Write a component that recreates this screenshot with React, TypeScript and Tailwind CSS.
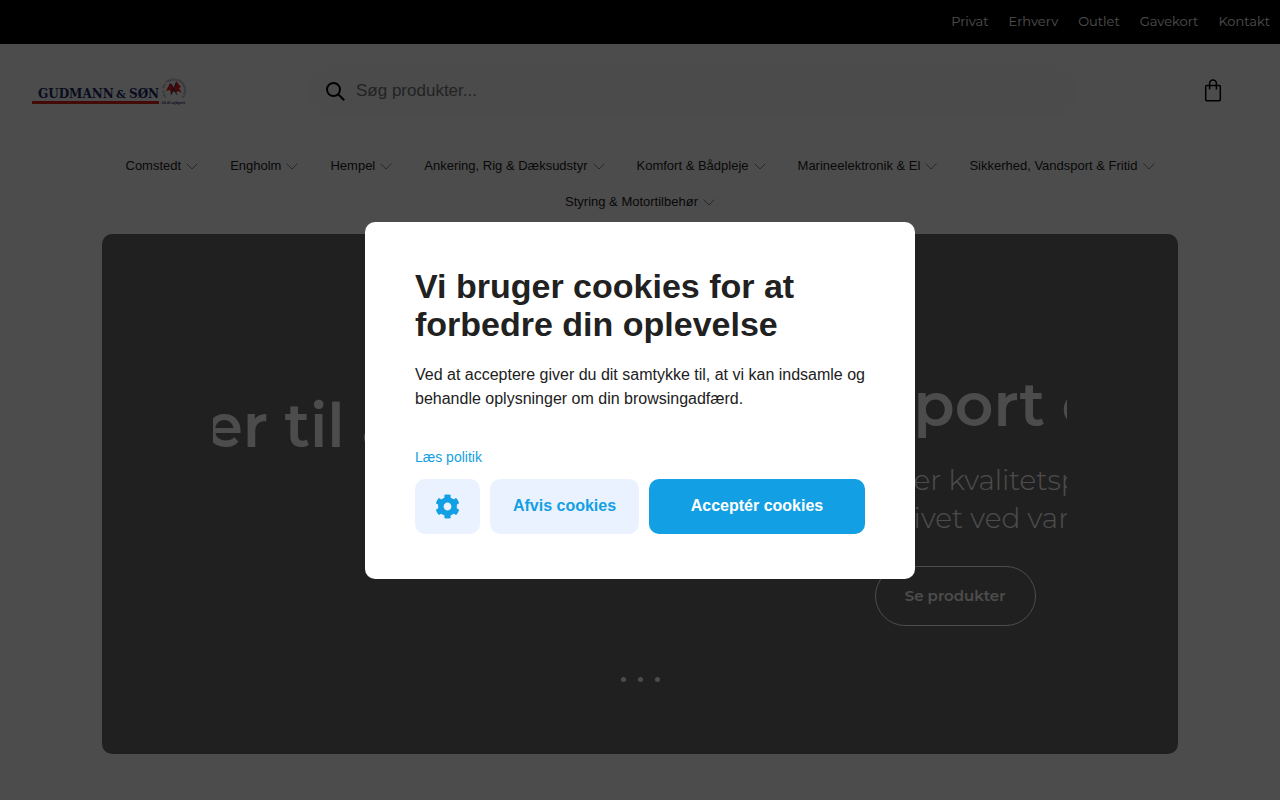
import { FaCog } from 'react-icons/fa';

const topLinks = ['Privat', 'Erhverv', 'Outlet', 'Gavekort', 'Kontakt'];

const categories = [
  'Comstedt',
  'Engholm',
  'Hempel',
  'Ankering, Rig & Dæksudstyr',
  'Komfort & Bådpleje',
  'Marineelektronik & El',
  'Sikkerhed, Vandsport & Fritid',
  'Styring & Motortilbehør',
];

function Logo() {
  return (
    <svg width="156" height="32" viewBox="0 0 156 32" role="img" aria-label="Gudmann & Søn">
      <text y="23" fontSize="12" fontWeight="700" fill="#1b2a6b" fontFamily="'DejaVu Serif', serif">
        <tspan x="6">GUDMANN</tspan>
        <tspan x="84" fontSize="11">&amp;</tspan>
        <tspan x="97">SØN</tspan>
      </text>
      <rect x="0" y="26" width="127" height="3" fill="#e2231a" />
      <path id="ring" d="M134.5 22 A10 10 0 1 1 149.5 22" fill="none" />
      <text fontSize="3" fill="#2d3558" fontFamily="'Liberation Sans', sans-serif">
        <textPath href="#ring">SEJL- OG PRESENNINGMAGER</textPath>
      </text>
      <path d="M134 16 L138 8 L141 11 L142 14 L144 6 L149 12 L147 13 L150 18 L146 16 L144 18 L142 16 L139 19 L138 15 Z" fill="#e2231a" />
      <path d="M139 9 L145 20 M144 8 L139 20" stroke="#1b2a6b" strokeWidth="0.8" />
      <text x="129" y="29" fontSize="4" fontStyle="italic" fontWeight="700" fill="#1b2a6b" fontFamily="'Liberation Serif', serif">
        Alt til sejlsport
      </text>
    </svg>
  );
}

function ChevronDown() {
  return (
    <svg width="12" height="7" viewBox="0 0 12 7" fill="none" stroke="#666" strokeWidth="0.8" aria-hidden="true">
      <path d="M0.5 0.6 L6 6 L11.5 0.6" />
    </svg>
  );
}

function Header() {
  return (
    <header>
      <nav aria-label="Genveje" className="flex h-11 items-center justify-end gap-5 bg-black px-2.5 font-['Montserrat','Inter',sans-serif] text-[13px] text-white">
        {topLinks.map((link) => (
          <a key={link} href="#">{link}</a>
        ))}
      </nav>
      <div className="flex items-center px-8 pt-5">
        <a href="#" className="w-[274px] shrink-0">
          <Logo />
        </a>
        <form role="search" className="flex h-[54px] flex-1 items-center gap-[11px] rounded-full bg-[#fafafa] px-5">
          <svg width="19" height="19" viewBox="0 0 19 19" fill="none" stroke="#000" strokeWidth="2" aria-hidden="true" className="shrink-0">
            <circle cx="7.5" cy="7.5" r="6.5" />
            <path d="M12.2 12.2 L18.2 18.2" />
          </svg>
          <input
            type="search"
            aria-label="Søg produkter"
            placeholder="Søg produkter..."
            className="w-full bg-transparent text-[17px] outline-none placeholder:text-[#757575]"
          />
        </form>
        <div className="flex w-[170px] shrink-0 justify-end pr-[26px]">
          <button type="button" aria-label="Kurv">
            <svg width="18" height="24" viewBox="0 0 18 24" fill="none" stroke="#000" strokeWidth="1.5" aria-hidden="true">
              <rect x="1.7" y="6.6" width="14.6" height="15.2" rx="1" />
              <path d="M5.6 10.6 V4.4 A3.4 3.4 0 0 1 12.4 4.4 V10.6" />
            </svg>
          </button>
        </div>
      </div>
      <nav aria-label="Kategorier" className="px-10 pt-[30px] pb-3.5">
        <ul className="flex flex-wrap justify-center gap-x-8">
          {categories.map((category) => (
            <li key={category}>
              <a href="#" className="flex h-9 items-center gap-[5px] text-[13px] text-[#212121]">
                {category}
                <ChevronDown />
              </a>
            </li>
          ))}
        </ul>
      </nav>
    </header>
  );
}

function Hero() {
  return (
    <section className="mx-[8%] flex h-[520px] flex-col rounded-[10px] bg-[#6b6b6b] px-[111px] pb-[72px] font-['Montserrat','Inter',sans-serif] text-white">
      <div className="flex flex-1 justify-between overflow-hidden whitespace-nowrap">
        <div className="pt-[152px]">
          <h2 className="-ml-2 text-[60px] leading-[80px] font-semibold">er til a</h2>
        </div>
        <div className="w-[192px] overflow-hidden pt-[131px]">
          <div className="pl-[39px]">
            <h2 className="text-[60px] leading-[80px] font-semibold">port o</h2>
            <p className="pt-4 text-[28px] leading-[38px] font-light">
              er kvalitetsp
              <br />
              ivet ved van
            </p>
          </div>
          <a href="#" className="mt-[29px] flex h-[60px] w-[161px] items-center justify-center rounded-full border border-white text-[15px] font-semibold">
            Se produkter
          </a>
        </div>
      </div>
      <div className="flex justify-center gap-3">
        {[1, 2, 3].map((slide) => (
          <button key={slide} type="button" aria-label={`Slide ${slide}`} className="size-[5px] rounded-full bg-white" />
        ))}
      </div>
    </section>
  );
}

function CookieDialog() {
  return (
    <div className="fixed inset-0 flex items-center justify-center bg-black/70">
      <div role="dialog" aria-modal="true" aria-labelledby="cookie-title" className="w-[550px] max-w-full rounded-[10px] bg-white px-[50px] py-[45px] text-[#212121]">
        <h1 id="cookie-title" className="text-[34px] leading-[38px] font-bold">
          Vi bruger cookies for at forbedre din oplevelse
        </h1>
        <p className="mt-5 text-base">
          Ved at acceptere giver du dit samtykke til, at vi kan indsamle og behandle oplysninger om din browsingadfærd.
        </p>
        <a href="#" className="mt-9 block w-fit text-sm text-[#139fe3]">Læs politik</a>
        <div className="mt-3 flex h-[55px] gap-2.5 font-bold">
          <button type="button" aria-label="Indstillinger" className="flex w-[65px] items-center justify-center rounded-[10px] bg-[#eaf2ff] text-[#139fe3]">
            <FaCog size={25} />
          </button>
          <button type="button" className="w-[149px] rounded-[10px] bg-[#eaf2ff] text-[#139fe3]">Afvis cookies</button>
          <button type="button" className="flex-1 rounded-[10px] bg-[#139fe3] text-white">Acceptér cookies</button>
        </div>
      </div>
    </div>
  );
}

export default function App() {
  return (
    <div className="min-h-screen bg-white pb-11 font-['Liberation_Sans',Arial,sans-serif]">
      <Header />
      <Hero />
      <CookieDialog />
    </div>
  );
}
